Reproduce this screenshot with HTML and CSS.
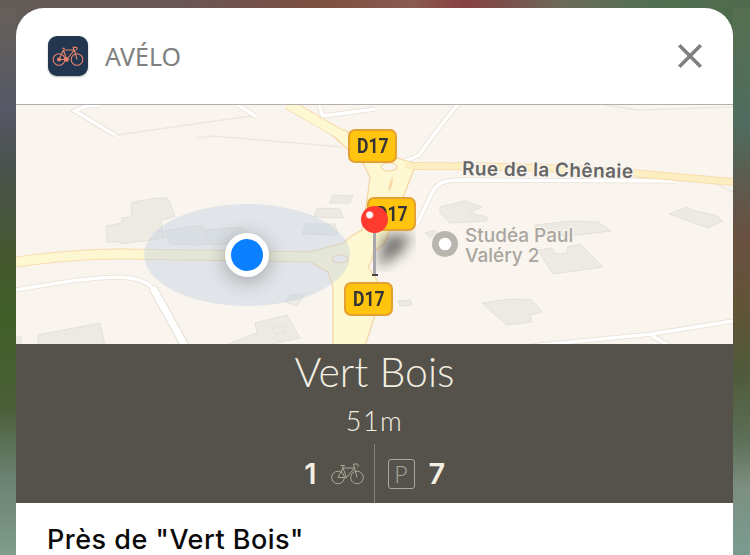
FILE: index.html
```html
<!DOCTYPE html>
<html lang="fr">
<head>
    <meta charset="UTF-8">
    <meta name="viewport" content="width=device-width, initial-scale=1.0">
    <title>Avélo</title>
    <link rel="stylesheet" href="styles.css">
</head>
<body>

<div class="card">
    <div class="card-header">
        <div class="app-icon">
            <svg width="32" height="22" viewBox="0 0 32 22" fill="none" stroke="#e8846c" stroke-width="1.1">
                <circle cx="7" cy="14.5" r="5.8"/>
                <circle cx="25" cy="14.5" r="5.8"/>
                <path d="M7 14.5 L11.5 5 H22.5 L25 14.5 M7 14.5 H14.5 L22.5 5 M11.5 5 L14.5 14.5 M10 3.2 H13 M21.8 5 L21.2 2.4 H24.4 C25.4 2.4 25.4 4.8 24 4.8"/>
                <circle cx="7" cy="14.5" r="1.5" fill="#e8846c"/>
                <circle cx="14.5" cy="14.5" r="1.8" fill="#e8846c"/>
            </svg>
        </div>
        <span class="app-name">AVÉLO</span>
        <svg class="close-icon" width="24" height="24" viewBox="0 0 24 24" stroke="#808080" stroke-width="3.6">
            <path d="M1.3 1.3 L22.7 22.7 M22.7 1.3 L1.3 22.7"/>
        </svg>
    </div>

    <div class="map">
        <!-- the viewBox uses page coordinates, easier to compare with the screen -->
        <svg class="map-base" width="717" height="239" viewBox="16 105 717 239">
            <defs>
                <filter id="blur7"><feGaussianBlur stdDeviation="7"/></filter>
                <g id="side-roads">
                    <path d="M115 135 L75 111 L86 106 L100 105 M238 105 L257 117 M319 105 L323 117 M323 116 L375 109"/>
                    <path d="M16 290 C50 284 80 279 100 278 C125 276 145 277 155 291"/>
                    <path d="M458 104 L435 133 L419 155 L405 161"/>
                    <path d="M417 224 L433 191 C438 182 446 180 462 180 L675 181"/>
                    <path d="M733 321 L652 334 L530 346 M652 336 L670 346"/>
                </g>
            </defs>

            <!-- thin lanes -->
            <path class="road-thin" d="M117 135 L257 115 M197 138 L213 136 L343 147 M605 105 L638 110 L733 107 M708 180 L733 192"/>

            <!-- white side roads -->
            <use class="road-white-edge" href="#side-roads"/>
            <path class="road-white-edge wide" d="M153 288 L185 346"/>
            <use class="road-white" href="#side-roads"/>
            <path class="road-white wide" d="M153 288 L185 346"/>

            <!-- buildings -->
            <g class="building">
                <path d="M133 202 L157 198 L167 198 L170 202 L175 217 L160 220 L162 227 L165 238 L122 244 L120 242 L107 242 L106 226 L122 223 L122 218 L132 217 L131 205Z"/>
                <path d="M165 231 L193 226 L203 226 L209 244 L197 245 L170 244Z"/>
                <path d="M205 230 L242 227 L250 233 L246 240 L217 245 L209 244Z"/>
                <path d="M333 195 L353 196 L350 203 L329 203Z"/>
                <path d="M317 208 L340 209 L343 218 L314 217Z"/>
                <path d="M305 224 L335 224 L338 235 L303 234Z"/>
                <path d="M290 295 L305 294 L297 306 L285 302Z"/>
                <path d="M228 344 L257 333 L255 323 L287 315 L300 338 L263 346Z M272 327 L283 325 L286 332 L275 334Z"/>
                <path d="M38 335 L100 323 L105 346 L38 346Z"/>
                <path d="M16 337 L21 337 L21 346 L16 346Z"/>
                <path d="M440 207 L465 201 L482 207 L470 213 L487 217 L487 221 L468 222 L450 223 L440 213Z"/>
                <path d="M535 225 L572 221 L598 222 L611 231 L578 235 L535 236Z"/>
                <path d="M538 250 L552 248 L555 254 L567 253 L567 247 L580 244 L603 267 L553 274Z"/>
                <path d="M669 214 L687 207 L695 211 L715 215 L723 221 L708 228Z"/>
                <path d="M482 303 L510 299 L532 300 L542 312 L530 315 L532 322 L507 325 L495 315Z"/>
                <path d="M398 301 L410 300 L412 305 L400 306Z"/>
                <path d="M425 233 L435 230 L438 233 L430 237Z"/>
            </g>

            <!-- yellow roads -->
            <path class="road-edge" d="M16 262 C60 256 90 254 120 254 L320 257"/>
            <path class="road-edge" d="M288 104 L345 137"/>
            <path class="road-edge thin" d="M405 166 C470 166 560 167 620 172 L733 182"/>
            <path class="road-fill" d="M345 130 L372 150 L416 164 L402 200 L385 243 L373 253 L372 260 L368 267 L377 280 L380 300 L365 346 L333 346 L333 287 L328 272 L310 262 L310 252 L343 243 L353 235 L362 230 L367 200 L370 177 L363 163 C350 152 340 142 332 135Z"/>
            <path class="road-inner" d="M16 262 C60 256 90 254 120 254 L322 257"/>
            <path class="road-inner" d="M288 104 L348 139"/>
            <path class="road-inner thin" d="M405 166 C470 166 560 167 620 172 L733 182"/>
            <ellipse class="road-hole" cx="340" cy="259" rx="8" ry="4"/>
            <ellipse class="road-hole" cx="389" cy="167" rx="8" ry="4"/>
            <path d="M393 176 C389 182 388 188 389 192 C392 188 393 182 393 176Z" fill="#f6d9a8"/>

            <!-- accuracy circle, squashed because the map is tilted -->
            <ellipse class="accuracy" cx="247" cy="255" rx="103" ry="51"/>

            <path class="pin-shadow" d="M378 268 L384 236 L412 234 L402 252Z" filter="url(#blur7)"/>

            <!-- labels -->
            <text class="label-street" x="462" y="175" textLength="171" transform="rotate(1 462 175)">Rue de la Chênaie</text>
            <circle cx="445" cy="244" r="13" fill="#b8b5ae"/>
            <circle cx="445" cy="244" r="6.3" fill="#fff"/>
            <text class="label-poi"><tspan x="465" y="242">Studéa Paul</tspan><tspan x="465" y="262">Valéry 2</tspan></text>
        </svg>

        <div class="shield shield-top"><span>D17</span></div>
        <div class="shield shield-mid"><span>D17</span></div>
        <div class="shield shield-bottom"><span>D17</span></div>

        <div class="user-dot"></div>

        <div class="pin">
            <div class="pin-head"></div>
            <div class="pin-stick"></div>
        </div>
    </div>

    <div class="station">
        <div class="station-name">Vert Bois</div>
        <div class="station-dist">51m</div>
        <div class="station-counts">
            <div class="count count-left">
                <span class="count-num">1</span>
                <svg width="33" height="23" viewBox="0 0 33 23" fill="none" stroke="#aaa79b" stroke-width="1">
                    <circle cx="7" cy="15.5" r="6.3"/>
                    <circle cx="26" cy="15.5" r="6.3"/>
                    <path d="M7 15.5 L12 6 H23.5 L26 15.5 M7 15.5 H15.5 L23.5 6 M12 6 L15.5 15.5 M9.5 3.5 H14 M12 6 L11.5 3.5 M23.5 6 L22.5 2 H26.5 C27.5 2 27.5 5 26 5"/>
                </svg>
            </div>
            <div class="count count-right">
                <span class="parking">P</span>
                <span class="count-num">7</span>
            </div>
        </div>
    </div>

    <h2 class="nearby-title">Près de "Vert Bois"</h2>
</div>

</body>
</html>
```

FILE: styles.css
```css
html, body {
    height: 100%;
}

/* blurred wallpaper, only visible round the card */
body {
    margin: 0;
    padding: 8px 17px 0 16px;
    box-sizing: border-box;
    overflow: hidden;
    position: relative;
    font-family: "Inter", "Liberation Sans", sans-serif;
    background: linear-gradient(90deg, #625c56 0, #6b5656 25%, #7c5040 42%, #8a5a50 55%, #874040 62%, #6c6a5a 75%, #4f7050 88%, #4f6a4c 100%);
}

body::before {
    content: "";
    position: absolute;
    top: 8px;
    bottom: 0;
    left: 0;
    width: 16px;
    background: linear-gradient(#66605a 0, #555865 102px, #4c5250 150px, #45582f 250px, #3f5f28 310px, #4a5f38 400px, #6a8272 470px, #7f9c8c 100%);
}

body::after {
    content: "";
    position: absolute;
    top: 8px;
    bottom: 0;
    right: 0;
    width: 17px;
    background: linear-gradient(#56704f 0, #4f6c60 115px, #5c5c50 170px, #6a5040 230px, #625438 300px, #4f5a3a 365px, #5c6e55 430px, #7c8f82 480px, #7a9c90 100%);
}

.card {
    height: 100%;
    background-color: white;
    border-radius: 28px 28px 0 0;
    overflow: hidden;
    display: flex;
    flex-direction: column;
}

.card-header {
    display: flex;
    align-items: center;
    height: 96px;
    padding: 0 31px 0 32px;
    border-bottom: 1px solid #b2b0ae;
    flex: none;
}

.app-icon {
    width: 40px;
    height: 40px;
    border-radius: 9px;
    background-color: #22364f;
    box-shadow: 0 1px 2px rgba(0, 0, 0, 0.3);
    display: flex;
    align-items: center;
    justify-content: center;
}

.app-name {
    margin-left: 17px;
    font-family: "Noto Sans", sans-serif;
    font-size: 25px;
    color: #808080;
}

.close-icon {
    margin-left: auto;
}

.map {
    position: relative;
    height: 239px;
    background-color: #f9f5ee;
    overflow: hidden;
    flex: none;
}

.map-base {
    display: block;
}

.road-thin {
    fill: none;
    stroke: #ece7dc;
    stroke-width: 1.5;
}

.road-white-edge {
    fill: none;
    stroke: #e6dfd3;
    stroke-width: 5;
}

.road-white {
    fill: none;
    stroke: #fff;
    stroke-width: 3.5;
}

.road-white-edge.wide {
    stroke-width: 9;
}

.road-white.wide {
    stroke-width: 7;
}

.building {
    fill: #eceae3;
    stroke: #e4e1d9;
    stroke-width: 1;
}

.road-edge {
    fill: none;
    stroke: #f6dcb0;
    stroke-width: 11;
}

.road-inner {
    fill: none;
    stroke: #fdf7d2;
    stroke-width: 9;
}

.road-edge.thin {
    stroke-width: 8;
}

.road-inner.thin {
    stroke: #fdeec2;
    stroke-width: 6;
}

.road-fill {
    fill: #fdf7d2;
    stroke: #f4d5a4;
    stroke-width: 1.2;
}

.road-hole {
    fill: #f9f5ee;
    stroke: #f4d5a4;
    stroke-width: 1.2;
}

.accuracy {
    fill: rgba(190, 205, 225, 0.4);
}

.pin-shadow {
    fill: rgba(0, 0, 0, 0.55);
}

.label-street {
    font-family: "Inter", sans-serif;
    font-weight: 600;
    font-size: 19px;
    fill: #666;
    stroke: #f9f5ee;
    stroke-width: 3;
    paint-order: stroke;
}

.label-poi {
    font-family: "Inter", sans-serif;
    font-weight: 500;
    font-size: 19px;
    fill: #a9a6a0;
    stroke: #f9f5ee;
    stroke-width: 2.5;
    paint-order: stroke;
}

.shield {
    position: absolute;
    box-sizing: border-box;
    width: 49px;
    height: 34px;
    background-color: #ffc40e;
    border: 2px solid #e5a033;
    border-radius: 7px;
    display: flex;
    align-items: center;
    justify-content: center;
    font-family: "Roboto", sans-serif;
    font-weight: 700;
    font-size: 21px;
    color: #333;
}

/* road numbers use a condensed face, Roboto has to be squeezed */
.shield span {
    display: block;
    transform: scaleX(0.84);
}

.shield-top {
    left: 332px;
    top: 24px;
}

.shield-mid {
    left: 351px;
    top: 92px;
}

.shield-bottom {
    left: 328px;
    top: 177px;
}

.user-dot {
    position: absolute;
    left: 209px;
    top: 128px;
    box-sizing: border-box;
    width: 44px;
    height: 44px;
    border-radius: 50%;
    background-color: #0a7fff;
    border: 6.5px solid white;
    box-shadow: 0 4px 20px rgba(0, 0, 0, 0.3);
}

.pin {
    position: absolute;
    left: 345px;
    top: 101px;
    width: 27px;
    display: flex;
    flex-direction: column;
    align-items: center;
}

.pin-head {
    width: 27px;
    height: 27px;
    border-radius: 50%;
    background: radial-gradient(circle at 32% 33%, #fff 0, #fff 10%, #ff3b30 17%);
    flex: none;
}

.pin-stick {
    position: relative;
    width: 3px;
    height: 43px;
    background-color: #a8a8ac;
}

.pin-stick::after {
    content: "";
    position: absolute;
    left: -1.5px;
    bottom: 0;
    width: 6px;
    height: 2px;
    background-color: #444;
}

.station {
    height: 159px;
    flex: none;
    background-color: #55524c;
    color: #f3efe2;
    text-align: center;
    display: flex;
    flex-direction: column;
    align-items: center;
}

.station-name {
    font-family: "Lato", sans-serif;
    font-weight: 300;
    font-size: 41px;
    line-height: 56px;
}

.station-dist {
    font-family: "Lato", sans-serif;
    font-weight: 300;
    font-size: 27px;
    letter-spacing: 1.5px;
    line-height: 30px;
    margin-top: 6px;
}

.station-counts {
    display: flex;
    margin-top: auto;
    height: 59px;
}

.count {
    display: flex;
    align-items: center;
    width: 100px;
    gap: 14px;
    box-sizing: border-box;
}

.count-left {
    justify-content: flex-end;
    padding-right: 10px;
    border-right: 1px solid #85827b;
}

.count-right {
    padding-left: 13px;
}

.count-num {
    font-family: "Inter", sans-serif;
    font-weight: 600;
    font-size: 29px;
}

.parking {
    box-sizing: border-box;
    width: 27px;
    height: 30px;
    border: 1px solid #aaa79b;
    border-radius: 3px;
    color: #aaa79b;
    font-family: "Lato", sans-serif;
    font-weight: 300;
    font-size: 23px;
    line-height: 28px;
}

.nearby-title {
    margin: 19px 0 0 31px;
    font-size: 27px;
    font-weight: 500;
    letter-spacing: 0.5px;
    color: #0a0a0a;
    line-height: 36px;
    white-space: nowrap;
}
```
